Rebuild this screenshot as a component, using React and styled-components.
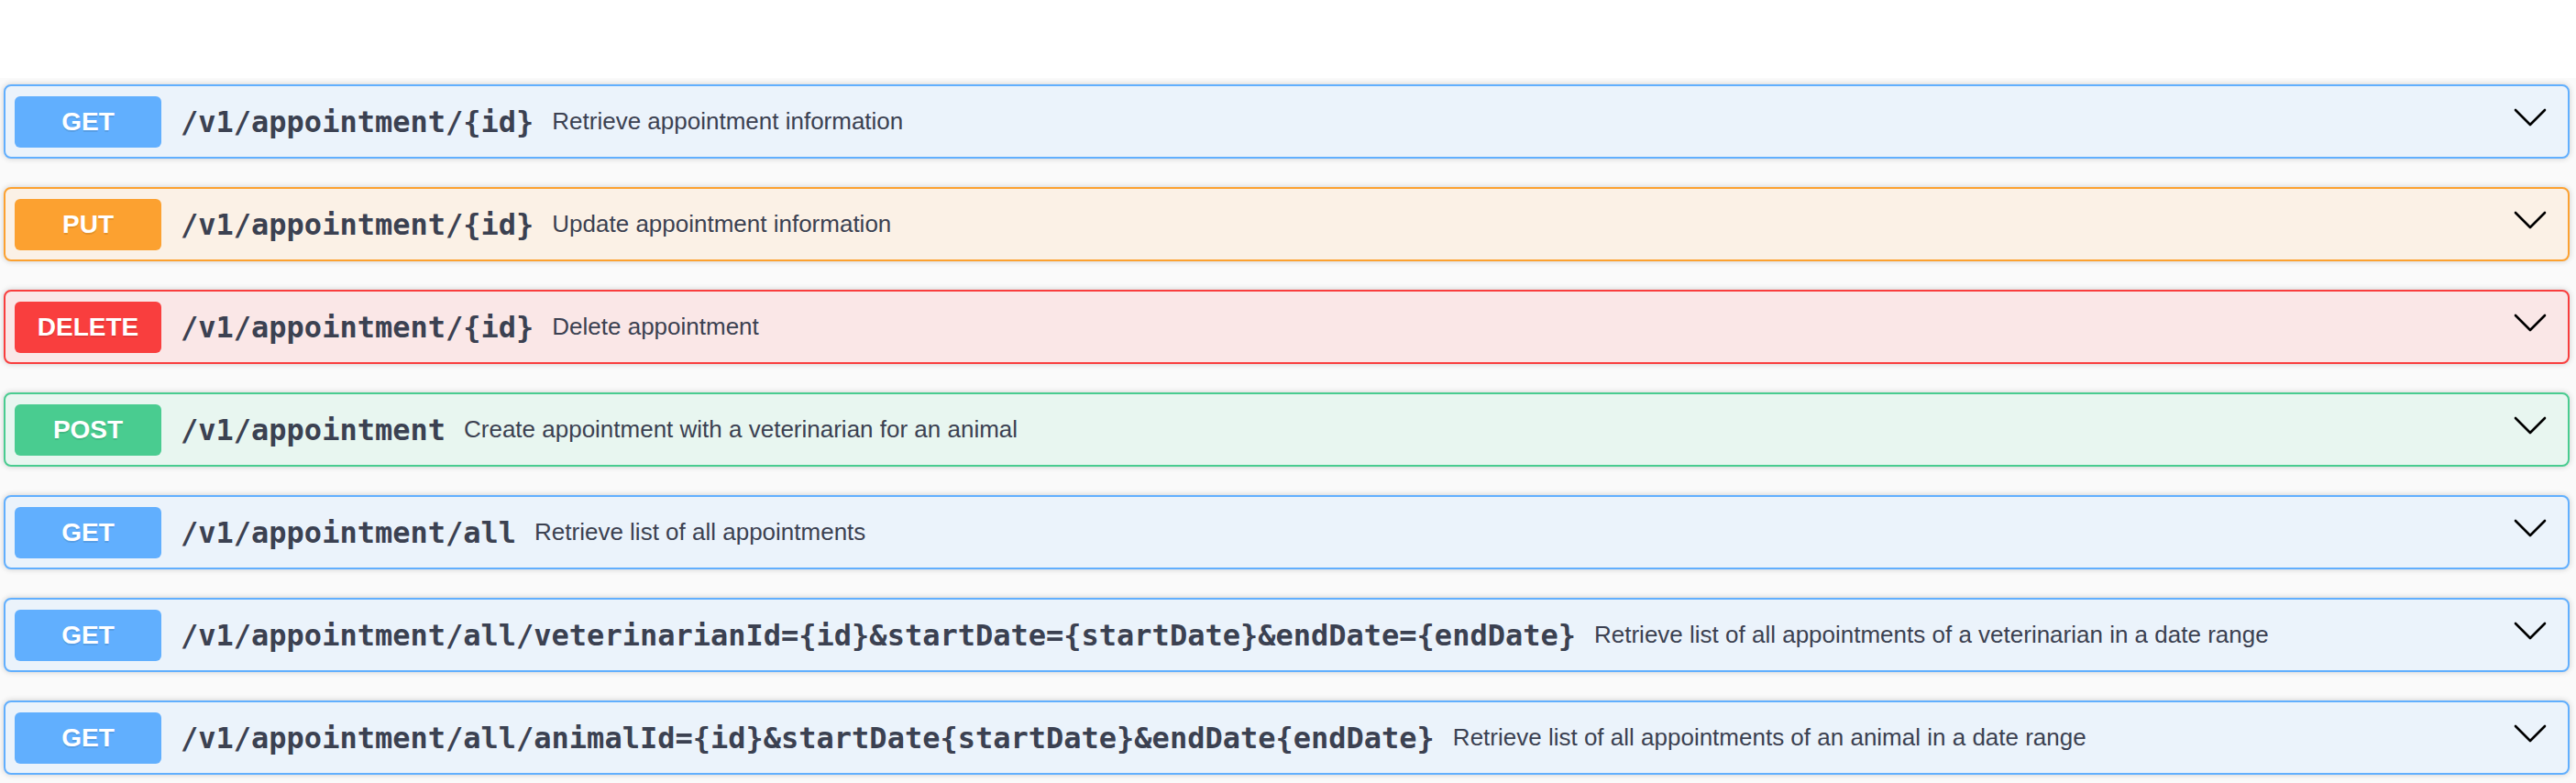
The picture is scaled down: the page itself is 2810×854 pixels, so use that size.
import React from 'react';
import styled, { createGlobalStyle } from 'styled-components';

const GlobalStyle = createGlobalStyle`
  html, body {
    margin: 0;
    padding: 0;
    background: #ffffff;
  }
  * {
    box-sizing: border-box;
  }
`;

const colors = {
  get: { main: '#61affe', bg: '#ebf3fb' },
  put: { main: '#fca130', bg: '#fbf1e6' },
  delete: { main: '#f93e3e', bg: '#fae7e7' },
  post: { main: '#49cc90', bg: '#e8f6f0' },
};

const Page = styled.div`
  width: 2810px;
  height: 854px;
  overflow: hidden;
  background: #ffffff;
`;

const Header = styled.div`
  height: 85px;
  background: #ffffff;
`;

const Section = styled.div`
  background: #fafafa;
  padding: 7px 7px 0 4px;
  height: 769px;
`;

const Block = styled.div`
  display: flex;
  align-items: center;
  height: 81px;
  margin-bottom: 31px;
  padding: 0 10px;
  border: 2px solid ${(p) => colors[p.$method].main};
  border-radius: 8px;
  background: ${(p) => colors[p.$method].bg};
  box-shadow: 0 0 6px rgba(0, 0, 0, 0.19);
`;

const Method = styled.span`
  flex: 0 0 160px;
  height: 56px;
  display: flex;
  align-items: center;
  justify-content: center;
  border-radius: 6px;
  background: ${(p) => colors[p.$method].main};
  color: #ffffff;
  font-family: 'Liberation Sans', Arial, sans-serif;
  font-weight: 700;
  font-size: 28px;
  text-shadow: 0 2px 0 rgba(0, 0, 0, 0.1);
`;

const Path = styled.span`
  padding: 0 20px 0 21px;
  font-family: 'DejaVu Sans Mono', 'Liberation Mono', monospace;
  font-weight: 700;
  font-size: 32px;
  color: #3b4151;
  white-space: nowrap;
`;

const Description = styled.span`
  flex: 1 1 auto;
  font-family: 'Liberation Sans', Arial, sans-serif;
  font-size: 26px;
  color: #3b4151;
  white-space: nowrap;
`;

const Arrow = styled.svg`
  flex: 0 0 36px;
  margin-right: 13px;
  margin-bottom: 10px;
`;

const ops = [
  { method: 'get', path: '/v1/appointment/{id}', desc: 'Retrieve appointment information' },
  { method: 'put', path: '/v1/appointment/{id}', desc: 'Update appointment information' },
  { method: 'delete', path: '/v1/appointment/{id}', desc: 'Delete appointment' },
  { method: 'post', path: '/v1/appointment', desc: 'Create appointment with a veterinarian for an animal' },
  { method: 'get', path: '/v1/appointment/all', desc: 'Retrieve list of all appointments' },
  {
    method: 'get',
    path: '/v1/appointment/all/veterinarianId={id}&startDate={startDate}&endDate={endDate}',
    desc: 'Retrieve list of all appointments of a veterinarian in a date range',
  },
  {
    method: 'get',
    path: '/v1/appointment/all/animalId={id}&startDate{startDate}&endDate{endDate}',
    desc: 'Retrieve list of all appointments of an animal in a date range',
  },
];

function Chevron() {
  return (
    <Arrow width="36" height="22" viewBox="0 0 36 22">
      <polyline
        points="2,3 18,19 34,3"
        fill="none"
        stroke="#000"
        strokeWidth="2.6"
        strokeLinecap="round"
        strokeLinejoin="round"
      />
    </Arrow>
  );
}

export default function App() {
  return (
    <Page>
      <GlobalStyle />
      <Header />
      <Section>
        {ops.map((op, i) => (
          <Block key={i} $method={op.method}>
            <Method $method={op.method}>{op.method.toUpperCase()}</Method>
            <Path>{op.path}</Path>
            <Description>{op.desc}</Description>
            <Chevron />
          </Block>
        ))}
      </Section>
    </Page>
  );
}
